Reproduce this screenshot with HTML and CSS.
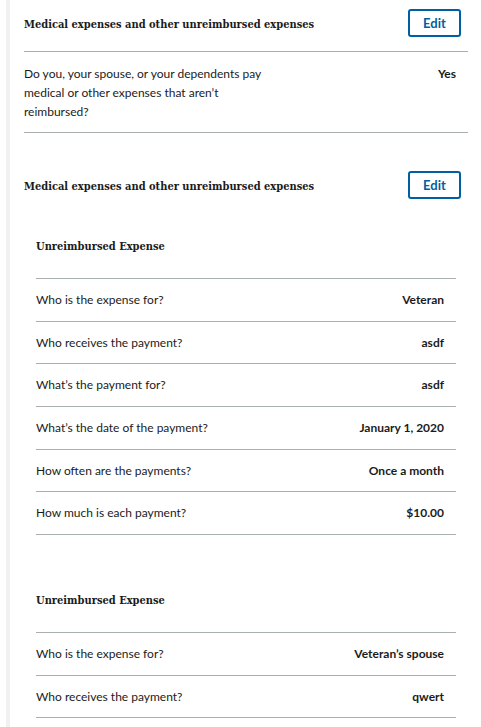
FILE: index.html
```html
<!DOCTYPE html>
<html>
<head>
<meta charset="utf-8">
<link rel="stylesheet" href="styles.css">
</head>
<body>
<div class="page">
  <div class="rail">
    <section class="chapter first">
      <div class="chapter-head">
        <h3 class="chapter-title">Medical expenses and other unreimbursed expenses</h3>
        <button class="edit-btn">Edit</button>
      </div>
      <dl class="review-row top-row">
        <dt class="question wrap">Do you, your spouse, or your dependents pay medical or other expenses that aren’t reimbursed?</dt>
        <dd class="answer">Yes</dd>
      </dl>
    </section>

    <section class="chapter second">
      <div class="chapter-head">
        <h3 class="chapter-title">Medical expenses and other unreimbursed expenses</h3>
        <button class="edit-btn">Edit</button>
      </div>

      <div class="item">
        <h4 class="item-title">Unreimbursed Expense</h4>
        <dl class="review-row"><dt class="question">Who is the expense for?</dt><dd class="answer">Veteran</dd></dl>
        <dl class="review-row"><dt class="question">Who receives the payment?</dt><dd class="answer">asdf</dd></dl>
        <dl class="review-row"><dt class="question">What’s the payment for?</dt><dd class="answer">asdf</dd></dl>
        <dl class="review-row"><dt class="question">What’s the date of the payment?</dt><dd class="answer">January 1, 2020</dd></dl>
        <dl class="review-row"><dt class="question">How often are the payments?</dt><dd class="answer">Once a month</dd></dl>
        <dl class="review-row"><dt class="question">How much is each payment?</dt><dd class="answer">$10.00</dd></dl>
      </div>

      <div class="item">
        <h4 class="item-title">Unreimbursed Expense</h4>
        <dl class="review-row"><dt class="question">Who is the expense for?</dt><dd class="answer">Veteran’s spouse</dd></dl>
        <dl class="review-row"><dt class="question">Who receives the payment?</dt><dd class="answer">qwert</dd></dl>
      </div>
    </section>
  </div>
</div>
</body>
</html>
```

FILE: styles.css
```css
html, body {
  margin: 0;
  padding: 0;
  background: #ffffff;
}

body {
  font-family: Lato, "Liberation Sans", sans-serif;
  color: #1b1b1b;
  font-size: 12px;
}

.page {
  padding-left: 6px;
}

.rail {
  border-left: 4px solid #f1f1f1;
  padding: 0 13px 0 14px;
  min-height: 727px;
  box-sizing: border-box;
}

.chapter-head {
  display: flex;
  align-items: center;
  justify-content: space-between;
}

.first .chapter-head {
  padding-top: 9px;
  padding-bottom: 14px;
  border-bottom: 1px solid #a9aeb1;
}

.second .chapter-head {
  padding-top: 38px;
}

.chapter-title {
  margin: 0;
  font-family: "DejaVu Serif", serif;
  font-stretch: condensed;
  font-weight: 700;
  font-size: 11px;
  line-height: 16px;
  padding-top: 3px;
}

.edit-btn {
  margin: 0 7px 0 0;
  width: 53px;
  height: 28px;
  border: 2px solid #005ea2;
  border-radius: 3px;
  background: #ffffff;
  color: #005ea2;
  font-family: Lato, "Liberation Sans", sans-serif;
  font-weight: 700;
  font-size: 13px;
  padding: 0;
}

.review-row {
  margin: 0;
  display: flex;
  justify-content: space-between;
  align-items: flex-start;
  padding: 12px 12px 12px 0;
  line-height: 17.67px;
  border-bottom: 1px solid #a9aeb1;
}

.top-row {
  padding-top: 12px;
  padding-bottom: 11px;
  line-height: 19px;
}

.question {
  margin: 0;
}

.question.wrap {
  width: 245px;
}

.answer {
  margin: 0;
  font-weight: 700;
  text-align: right;
}

.item {
  margin: 0 12px;
}

.second .item {
  padding-top: 40px;
}

.second .item + .item {
  padding-top: 58px;
}

.item-title {
  margin: 0;
  font-family: "DejaVu Serif", serif;
  font-stretch: condensed;
  font-weight: 700;
  font-size: 11px;
  line-height: 16px;
  padding-bottom: 23px;
  border-bottom: 1px solid #a9aeb1;
}
```
